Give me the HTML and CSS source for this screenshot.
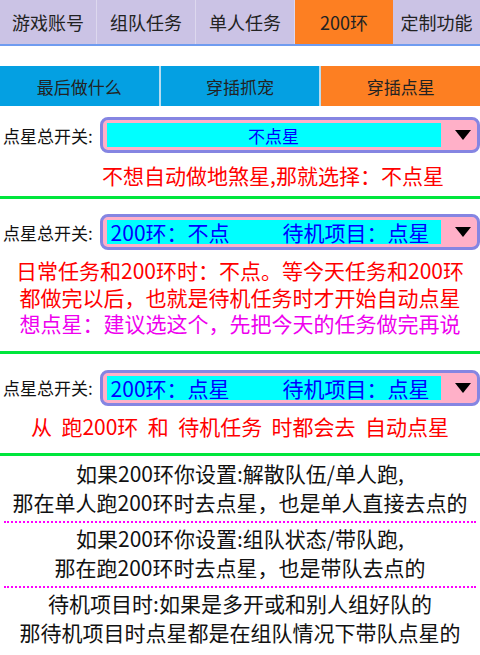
FILE: index.html
```html
<!DOCTYPE html>
<html lang="zh">
<head>
  <meta charset="UTF-8" />
  <title>200环 - 点星</title>
  <link rel="stylesheet" href="styles.css">
</head>
<body>
  <div class="main-tabs">
    <div class="tab t1">游戏账号</div>
    <div class="tab t2">组队任务</div>
    <div class="tab t3">单人任务</div>
    <div class="tab t4 active">200环</div>
    <div class="tab t5">定制功能</div>
  </div>

  <div class="sub-tabs">
    <div class="sub">最后做什么</div>
    <div class="sub">穿插抓宠</div>
    <div class="sub active">穿插点星</div>
  </div>

  <div class="section s1">
    <div class="row">
      <div class="label">点星总开关:</div>
      <div class="select">
        <div class="value center">不点星</div>
        <div class="arrow"></div>
      </div>
    </div>
    <p class="note red small-gap">不想自动做地煞星,那就选择：不点星</p>
  </div>

  <div class="section s2">
    <div class="row">
      <div class="label">点星总开关:</div>
      <div class="select">
        <div class="value big"><span>200环：不点</span><span>待机项目：点星</span></div>
        <div class="arrow"></div>
      </div>
    </div>
    <div class="notes">
      <p class="note red">日常任务和200环时：不点。等今天任务和200环</p>
      <p class="note red">都做完以后，也就是待机任务时才开始自动点星</p>
      <p class="note pink">想点星：建议选这个，先把今天的任务做完再说</p>
    </div>
  </div>

  <div class="section s3">
    <div class="row">
      <div class="label">点星总开关:</div>
      <div class="select">
        <div class="value big"><span>200环：点星</span><span>待机项目：点星</span></div>
        <div class="arrow"></div>
      </div>
    </div>
    <div class="notes">
      <p class="note red">从&nbsp; 跑200环&nbsp; 和&nbsp; 待机任务&nbsp; 时都会去&nbsp; 自动点星</p>
    </div>
  </div>

  <div class="info">
    <div class="block">
      <p>如果200环你设置:解散队伍/单人跑,</p>
      <p>那在单人跑200环时去点星，也是单人直接去点的</p>
    </div>
    <div class="block">
      <p>如果200环你设置:组队状态/带队跑,</p>
      <p>那在跑200环时去点星，也是带队去点的</p>
    </div>
    <div class="block">
      <p>待机项目时:如果是多开或和别人组好队的</p>
      <p>那待机项目时点星都是在组队情况下带队点星的</p>
    </div>
  </div>
</body>
</html>
```

FILE: styles.css
```css
body {
    margin: 0;
    width: 480px;
    font-family: "Noto Sans CJK SC", "Noto Sans", sans-serif;
    background-color: white;
    color: #111;
}

p {
    margin: 0;
}

.main-tabs {
    display: flex;
    height: 44px;
    border-bottom: 2px solid #6f9cf0;
    background-color: #cbc3e5;
}

.tab {
    display: flex;
    justify-content: center;
    align-items: center;
    font-size: 18px;
    color: #222;
    border-right: 1px solid #ddd8ee;
}

.t1 { width: 96px; }
.t2 { width: 98px; }
.t3 { width: 98px; }
.t4 { width: 98px; }
.t5 { flex: 1; border-right: none; }

.tab.active {
    background-color: #fd7f22;
    border-right: none;
}

.sub-tabs {
    display: flex;
    margin-top: 20px;
    height: 40px;
    gap: 2px;
    background-color: #b8dcf0;
}

.sub {
    flex: 1;
    display: flex;
    justify-content: center;
    align-items: center;
    font-size: 17px;
    color: #222;
    background-color: #04a0e2;
}

.sub.active {
    background-color: #fd7f22;
}

.section {
    border-bottom: 3px solid #00e63c;
}

.s1 { padding: 11px 0 6px; }
.s2 { padding: 15px 0 14px; }
.s3 { padding: 16px 0 14px; }

.row {
    display: flex;
    align-items: center;
    height: 36px;
}

.label {
    width: 97px;
    padding-left: 3px;
    font-size: 17px;
    color: #111;
}

.select {
    display: flex;
    align-items: center;
    width: 372px;
    height: 30px;
    padding: 0 0 0 4px;
    border: 3px solid #8585e2;
    border-radius: 8px;
    background-color: #ffb0c8;
}

.value {
    width: 334px;
    height: 24px;
    background-color: #00ffff;
    color: #0000ff;
    display: flex;
    align-items: center;
}

.value.center {
    justify-content: center;
    font-size: 17px;
}

.value.big {
    font-size: 21px;
    gap: 53px;
    padding-left: 4px;
    width: 330px;
    white-space: nowrap;
}

.arrow {
    margin-left: 14px;
    width: 0;
    height: 0;
    border-left: 8px solid transparent;
    border-right: 8px solid transparent;
    border-top: 10px solid #000;
}

.note {
    text-align: center;
    font-size: 21px;
    line-height: 26.5px;
    white-space: nowrap;
}

.small-gap {
    margin-top: 7px;
    padding-left: 66px;
    font-size: 21px;
    line-height: 30px;
}

.notes {
    margin-top: 7px;
}

.red { color: #ff0000; }
.pink { color: #ee00ee; }

.info {
    padding-top: 2px;
}

.block {
    border-bottom: 2px dotted #ff00ff;
    padding: 1px 0 4px;
    margin: 0 4px;
}

.block:last-child {
    border-bottom: none;
}

.block p {
    text-align: center;
    font-size: 21px;
    line-height: 29px;
    white-space: nowrap;
}
```
